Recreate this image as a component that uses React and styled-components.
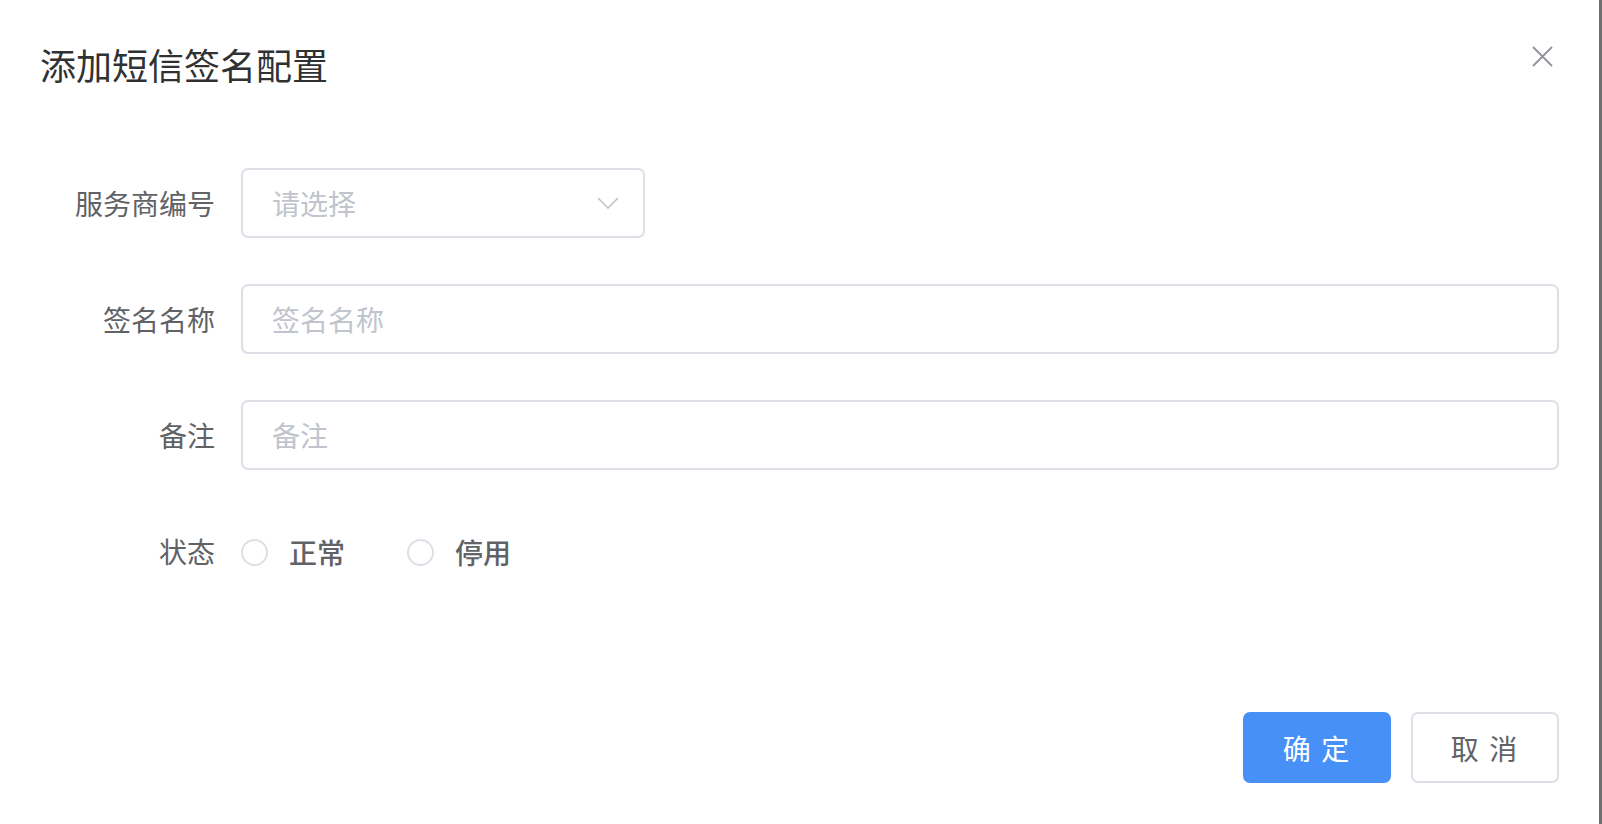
import React from "react";
import styled, { createGlobalStyle } from "styled-components";

const GlobalStyle = createGlobalStyle`
  html, body {
    margin: 0;
    padding: 0;
    background: #fff;
  }
  body {
    font-family: "Noto Sans CJK SC", "Noto Sans", "Liberation Sans", sans-serif;
  }
`;

const Dialog = styled.div`
  width: 1599px;
  height: 824px;
  background: #fff;
  border-right: 3px solid #6f6f6f;
  display: flex;
  flex-direction: column;
`;

const Header = styled.div`
  display: flex;
  align-items: flex-start;
  justify-content: space-between;
  padding: 46px 46px 0 40px;
`;

const Title = styled.h2`
  margin: 0;
  font-size: 36px;
  line-height: 36px;
  font-weight: 400;
  color: #303133;
`;

const CloseBtn = styled.button`
  border: none;
  background: none;
  padding: 0;
  width: 21px;
  height: 21px;
  cursor: pointer;
  display: flex;
`;

const Form = styled.form`
  display: grid;
  grid-template-columns: 215px 1318px;
  column-gap: 26px;
  row-gap: 46px;
  margin-top: 86px;
`;

const Label = styled.label`
  height: 70px;
  display: flex;
  align-items: center;
  justify-content: flex-end;
  font-size: 28px;
  color: #606266;
`;

const Field = styled.div`
  height: 70px;
  display: flex;
  align-items: center;
`;

const Box = styled.div`
  box-sizing: border-box;
  width: ${(p) => p.width || "100%"};
  height: 70px;
  border: 2px solid #dcdfe6;
  border-radius: 7px;
  display: flex;
  align-items: center;
  justify-content: space-between;
  padding: 0 24px 0 29px;
`;

const Placeholder = styled.span`
  font-size: 28px;
  color: #c0c4cc;
`;

const RadioGroup = styled.div`
  display: flex;
  align-items: center;
  gap: 62px;
  margin-top: 2px;
`;

const Radio = styled.label`
  display: flex;
  align-items: center;
  gap: 21px;
  cursor: pointer;
`;

const RadioCircle = styled.span`
  box-sizing: border-box;
  width: 27px;
  height: 27px;
  border: 2px solid #dcdfe6;
  border-radius: 50%;
  background: #fff;
`;

const RadioText = styled.span`
  font-size: 28px;
  font-weight: 500;
  color: #606266;
`;

const Footer = styled.div`
  display: flex;
  justify-content: flex-end;
  gap: 20px;
  padding-right: 40px;
  margin-top: 126px;
`;

const Button = styled.button`
  box-sizing: border-box;
  width: 148px;
  height: 71px;
  border-radius: 7px;
  font-family: inherit;
  font-size: 28px;
  letter-spacing: 2px;
  cursor: pointer;
  border: 2px solid ${(p) => (p.$primary ? "#4790f7" : "#dcdfe6")};
  background: ${(p) => (p.$primary ? "#4790f7" : "#fff")};
  color: ${(p) => (p.$primary ? "#fff" : "#606266")};
`;

const Chevron = () => (
  <svg width="22" height="12" viewBox="0 0 22 12" fill="none">
    <path d="M1 1l10 10L21 1" stroke="#c0c4cc" strokeWidth="1.6" />
  </svg>
);

const CloseIcon = () => (
  <svg width="21" height="21" viewBox="0 0 21 21" fill="none">
    <path d="M1 1l19 19M20 1L1 20" stroke="#909399" strokeWidth="1.8" />
  </svg>
);

export default function App() {
  return (
    <>
      <GlobalStyle />
      <Dialog>
        <Header>
          <Title>添加短信签名配置</Title>
          <CloseBtn aria-label="close">
            <CloseIcon />
          </CloseBtn>
        </Header>
        <Form onSubmit={(e) => e.preventDefault()}>
          <Label>服务商编号</Label>
          <Field>
            <Box width="404px">
              <Placeholder>请选择</Placeholder>
              <Chevron />
            </Box>
          </Field>
          <Label>签名名称</Label>
          <Field>
            <Box>
              <Placeholder>签名名称</Placeholder>
            </Box>
          </Field>
          <Label>备注</Label>
          <Field>
            <Box>
              <Placeholder>备注</Placeholder>
            </Box>
          </Field>
          <Label>状态</Label>
          <Field>
            <RadioGroup>
              <Radio>
                <RadioCircle />
                <RadioText>正常</RadioText>
              </Radio>
              <Radio>
                <RadioCircle />
                <RadioText>停用</RadioText>
              </Radio>
            </RadioGroup>
          </Field>
        </Form>
        <Footer>
          <Button $primary type="button">确 定</Button>
          <Button type="button">取 消</Button>
        </Footer>
      </Dialog>
    </>
  );
}
